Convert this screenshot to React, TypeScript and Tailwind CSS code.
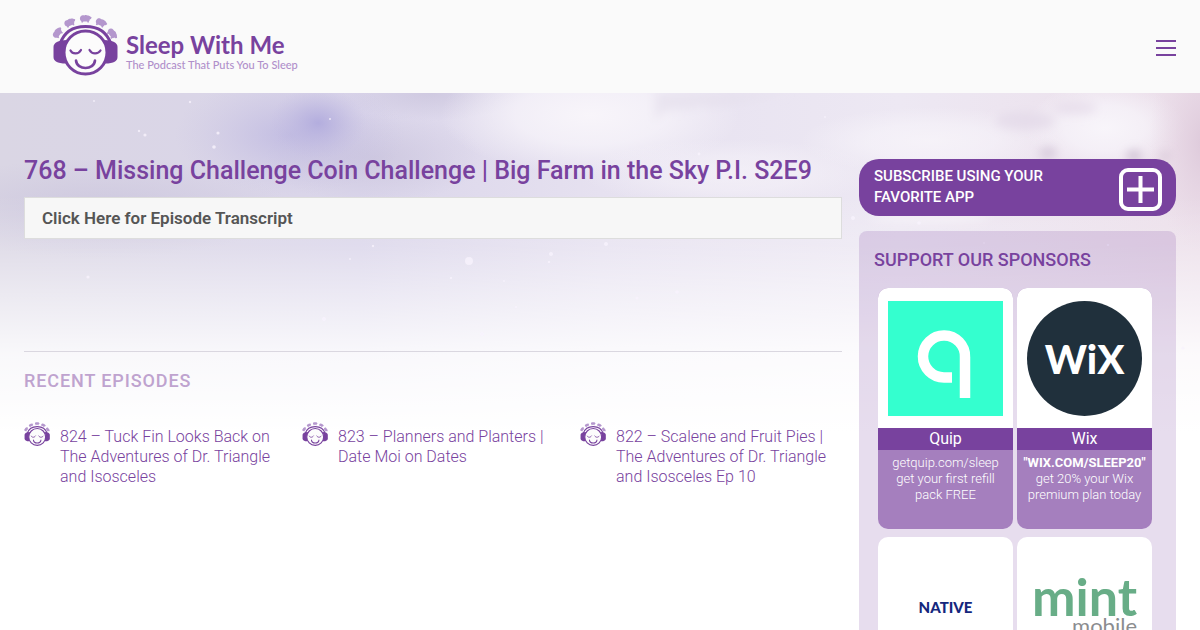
import { Menu } from '@headlessui/react';

const PURPLE = '#78429e';

const episodes = [
  { title: '824 – Tuck Fin Looks Back on The Adventures of Dr. Triangle and Isosceles', href: '#824' },
  { title: '823 – Planners and Planters | Date Moi on Dates', href: '#823' },
  { title: '822 – Scalene and Fruit Pies | The Adventures of Dr. Triangle and Isosceles Ep 10', href: '#822' },
];

const sheep = [
  { x: 6, y: 19, r: -52 },
  { x: 18, y: 9, r: -22 },
  { x: 33.5, y: 5, r: 0 },
  { x: 49, y: 9, r: 24 },
  { x: 60, y: 20, r: 52 },
];

const stars = [
  [94, 8, 1], [190, 9, 1.2], [218, 40, 1.6], [139, 38, 1.2], [145, 42, 1.6], [214, 54, 1.8], [330, 26, 1],
  [469, 168, 4], [551, 161, 2], [549, 169, 1.2], [451, 185, 1.2], [606, 151, 2], [637, 205, 1.6], [677, 199, 1.8],
  [324, 226, 2], [482, 241, 2], [88, 184, 1.6], [350, 166, 1], [373, 153, 1.2], [516, 214, 1.2], [504, 188, 1],
  [853, 125, 2], [919, 130, 1.8], [1108, 152, 1.2], [984, 150, 1], [1183, 255, 1.6], [699, 61, 1.4], [825, 24, 1],
];

function SleepyHead({ className }: { className: string }) {
  return (
    <svg viewBox="0 0 66 62" className={className} aria-hidden="true">
      {sheep.map(s => (
        <g key={s.x} transform={`translate(${s.x} ${s.y}) rotate(${s.r})`} fill="#b497cd">
          <path d="M-5-2.500C-4-4-2-3.800-1.200-3.600C0-4.400 1.600-4 2.200-3.600C3-3.600 4-3.200 4.400-2.800L6.200-1.600L5.400 0L4.200.4C4.200 1.400 3.800 2 3.400 2.200V3.600H2L1.600 2.600H-2.200L-2.600 3.600H-4L-4.200 2.200C-5.800 1-6-1-5-2.500Z" />
        </g>
      ))}
      <path d="M8 30C12 18 21 12.500 33.500 12.500S55 18 59 30" fill="none" stroke={PURPLE} strokeWidth="3" />
      <path d="M15 26C6 26 1.500 29 1.500 33V43C1.500 47 5 49.500 14 49.500Z" fill={PURPLE} />
      <path d="M52 26C61 26 65.500 29 65.500 33V43C65.500 47 62 49.500 53 49.500Z" fill={PURPLE} />
      <circle cx="33.5" cy="38.500" r="21.500" fill="#fcfcfc" stroke={PURPLE} strokeWidth="3" />
      <g fill="none" stroke={PURPLE} strokeWidth="2.200" strokeLinecap="round">
        <path d="M18.500 36.500C20.500 40.500 26.500 40.500 29 36" />
        <path d="M37.500 36C40 40.500 46 40.500 48.500 36.500" />
        <path d="M24 46.500C25 56.500 42 56.500 43 46.500" strokeWidth="2.600" />
      </g>
    </svg>
  );
}

function Sky() {
  return (
    <svg viewBox="0 0 1200 340" preserveAspectRatio="none" className="absolute inset-x-0 top-0 -z-10 h-[340px] w-full" aria-hidden="true">
      <defs>
        <linearGradient id="base" x1="0" x2="1" y1="0" y2="0">
          <stop offset="0" stopColor="#dad6e4" />
          <stop offset="0.3" stopColor="#dad5ea" />
          <stop offset="0.5" stopColor="#e6e1f0" />
          <stop offset="0.75" stopColor="#ede8f3" />
          <stop offset="1" stopColor="#ecdfea" />
        </linearGradient>
        <linearGradient id="fade" x1="0" x2="0" y1="0" y2="1">
          <stop offset="0.3" stopColor="#fff" stopOpacity="0" />
          <stop offset="0.45" stopColor="#fff" stopOpacity="0.18" />
          <stop offset="0.6" stopColor="#fff" stopOpacity="0.5" />
          <stop offset="0.77" stopColor="#fff" stopOpacity="0.84" />
          <stop offset="1" stopColor="#fff" />
        </linearGradient>
        <radialGradient id="violet">
          <stop offset="0" stopColor="#b3adde" />
          <stop offset="0.4" stopColor="#b9b3df" stopOpacity="0.6" />
          <stop offset="1" stopColor="#c5bfe2" stopOpacity="0" />
        </radialGradient>
        <radialGradient id="haze">
          <stop offset="0" stopColor="#c9c3dc" stopOpacity="0.7" />
          <stop offset="1" stopColor="#c9c3dc" stopOpacity="0" />
        </radialGradient>
        <radialGradient id="light">
          <stop offset="0" stopColor="#f8f5fa" />
          <stop offset="0.5" stopColor="#f7f4fa" stopOpacity="0.75" />
          <stop offset="1" stopColor="#f6f3f9" stopOpacity="0" />
        </radialGradient>
        <radialGradient id="rose">
          <stop offset="0" stopColor="#ddc9da" />
          <stop offset="1" stopColor="#e6d4e3" stopOpacity="0" />
        </radialGradient>
        <filter id="wisp" x="-50%" y="-100%" width="200%" height="300%">
          <feGaussianBlur stdDeviation="5" />
        </filter>
      </defs>
      <rect width="1200" height="340" fill="url(#base)" />
      <ellipse cx="100" cy="115" rx="190" ry="50" fill="url(#haze)" />
      <ellipse cx="375" cy="65" rx="110" ry="45" fill="url(#haze)" />
      <ellipse cx="430" cy="0" rx="90" ry="28" fill="url(#haze)" />
      <ellipse cx="290" cy="42" rx="115" ry="60" fill="url(#violet)" fillOpacity="0.6" />
      <ellipse cx="318" cy="30" rx="48" ry="36" fill="url(#violet)" />
      <ellipse cx="590" cy="22" rx="150" ry="60" fill="url(#light)" />
      <ellipse cx="730" cy="80" rx="150" ry="34" fill="url(#light)" fillOpacity="0.6" />
      <ellipse cx="930" cy="48" rx="130" ry="34" fill="url(#light)" fillOpacity="0.8" />
      <ellipse cx="1105" cy="35" rx="80" ry="45" fill="url(#light)" />
      <ellipse cx="1205" cy="50" rx="56" ry="110" fill="url(#rose)" />
      <g filter="url(#wisp)">
        <path d="M655 30C662 8 690 22 700 12C720 20 740 6 790 0H655Z" fill="#e6dfed" fillOpacity="0.7" />
        <ellipse cx="1025" cy="28" rx="30" ry="9" fill="#e3d9e8" fillOpacity="0.7" />
        <ellipse cx="1075" cy="15" rx="22" ry="7" fill="#e6dcea" fillOpacity="0.7" />
        <ellipse cx="1048" cy="60" rx="9" ry="6" fill="#d8ccdd" />
        <ellipse cx="1134" cy="63" rx="8" ry="6" fill="#d2c4d6" />
        <ellipse cx="1165" cy="63" rx="5" ry="4" fill="#d8c9d8" />
        <ellipse cx="930" cy="125" rx="60" ry="4" fill="#f6f1f7" />
      </g>
      <rect width="1200" height="340" fill="url(#fade)" />
      <g fill="#f8f2fc" fillOpacity="0.8">
        {stars.map(([x, y, r]) => <circle key={`${x}-${y}`} cx={x} cy={y} r={r} />)}
      </g>
    </svg>
  );
}

function QuipLogo() {
  return (
    <svg viewBox="0 0 115 115" className="w-full" role="img" aria-label="Quip">
      <rect width="115" height="115" fill="#34ffcf" />
      <path d="M64 76.500H56A21 21 0 1 1 77 56V97" fill="none" stroke="#fff" strokeWidth="10.500" />
    </svg>
  );
}

function WixLogo() {
  return (
    <div className="flex aspect-square items-center justify-center rounded-full bg-[#20303c] font-['Lato',sans-serif] text-[40px] leading-none font-black text-white">
      WiX
    </div>
  );
}

function NativeLogo() {
  return (
    <div className="flex aspect-square items-center justify-center font-['Lato',sans-serif] text-[15px] leading-none font-black text-[#14277d]">
      NATIVE
    </div>
  );
}

function MintLogo() {
  return (
    <div className="flex aspect-square flex-col items-center justify-center font-['Lato',sans-serif]">
      <div className="text-right">
        <div className="text-[52px] leading-9 font-bold text-[#68ad87]">mint</div>
        <div className="text-[22px] leading-6 text-[#8b8d8f]">mobile</div>
      </div>
    </div>
  );
}

const sponsors = [
  { name: 'Quip', logo: QuipLogo, lead: 'getquip.com/sleep', strong: false, text: 'get your first refill pack FREE' },
  { name: 'Wix', logo: WixLogo, lead: '"WIX.COM/SLEEP20"', strong: true, text: 'get 20% your Wix premium plan today' },
  { name: '', logo: NativeLogo, lead: '', strong: false, text: '' },
  { name: '', logo: MintLogo, lead: '', strong: false, text: '' },
];

function SponsorCard({ sponsor }: { sponsor: typeof sponsors[0] }) {
  const Logo = sponsor.logo;

  return (
    <a href="#sponsors" className="flex flex-col overflow-hidden rounded-[10px] bg-[#a57fbe] text-center text-white">
      <div className="bg-white px-[10px] pt-[13px] pb-3"><Logo /></div>
      {sponsor.name && (
        <>
          <h3 className="bg-[#78429e] text-base leading-[22px]">{sponsor.name}</h3>
          <p className="pt-[5px] pb-[26px] text-[13px] leading-4 font-light">
            <span className={sponsor.strong ? 'block font-bold' : 'block'}>{sponsor.lead}</span>
            <span className="block px-2">{sponsor.text}</span>
          </p>
        </>
      )}
    </a>
  );
}

export default function App() {
  return (
    <div className="min-h-screen bg-white font-['Roboto',sans-serif] text-[#78429e]">
      <header className="flex h-[93px] items-center justify-between bg-[#fafafa] px-6 pb-1">
        <a href="#home" className="flex items-center gap-2 pl-7">
          <SleepyHead className="h-[62px] w-[66px]" />
          <span className="pt-3 font-['Lato',sans-serif]">
            <span className="block text-2xl leading-7 font-bold">Sleep With Me</span>
            <span className="block text-[11px] leading-3 font-medium text-[#b08fca]">The Podcast That Puts You To Sleep</span>
          </span>
        </a>
        <Menu>
          <Menu.Button aria-label="Open menu" className="flex w-5 flex-col gap-[5px] pt-1.5">
            <span className="h-0.5 bg-[#78429e]" />
            <span className="h-0.5 bg-[#78429e]" />
            <span className="h-0.5 bg-[#78429e]" />
          </Menu.Button>
        </Menu>
      </header>

      <div className="relative isolate">
        <Sky />
        <div className="grid grid-cols-[minmax(0,1fr)_317px] gap-[17px] px-6 pt-[66px]">
          <main>
            <h1 className="text-[25px] leading-6 font-medium">768 – Missing Challenge Coin Challenge | Big Farm in the Sky P.I. S2E9</h1>
            <button className="mt-[14px] block w-full border border-[#dddddd] bg-[#f7f7f7] px-[17px] text-left text-[17px] leading-10 font-semibold text-[#555555]">
              Click Here for Episode Transcript
            </button>

            <section className="mt-28 border-t border-[#dad7e0] pt-[17px]">
              <h2 className="text-lg leading-6 font-medium tracking-wider text-[#bfa3cf]">RECENT EPISODES</h2>
              <ul className="mt-7 grid grid-cols-3 gap-4">
                {episodes.map(ep => (
                  <li key={ep.href}>
                    <a href={ep.href} className="flex gap-[10px]">
                      <SleepyHead className="h-[26px] w-[26px] shrink-0" />
                      <span className="pt-1.5 text-base leading-5 font-light">{ep.title}</span>
                    </a>
                  </li>
                ))}
              </ul>
            </section>
          </main>

          <aside>
            <button className="flex w-full items-start justify-between rounded-[20px] bg-[#78429e] pt-[7px] pr-[14px] pb-[5px] pl-[15px] text-left text-white">
              <span className="w-48 text-[15px] leading-[21px] font-medium">SUBSCRIBE USING YOUR FAVORITE APP</span>
              <svg viewBox="0 0 43 45" className="h-[45px] w-[43px]" fill="none" stroke="#fff" strokeWidth="4" aria-hidden="true">
                <rect x="2" y="4" width="39" height="39" rx="7" />
                <path d="M21.500 10V37M8 23.500H35" />
              </svg>
            </button>

            {/* Sponsors */}
            <section id="sponsors" className="mt-[15px] rounded-t-lg bg-[#78429e]/18 pt-[17px]">
              <h2 className="pl-[15px] text-lg leading-6 font-medium">SUPPORT OUR SPONSORS</h2>
              <div className="mt-4 grid grid-cols-2 gap-x-1 gap-y-2 pr-6 pl-[19px]">
                {sponsors.map((s, i) => <SponsorCard key={i} sponsor={s} />)}
              </div>
            </section>
          </aside>
        </div>
      </div>
    </div>
  );
}
